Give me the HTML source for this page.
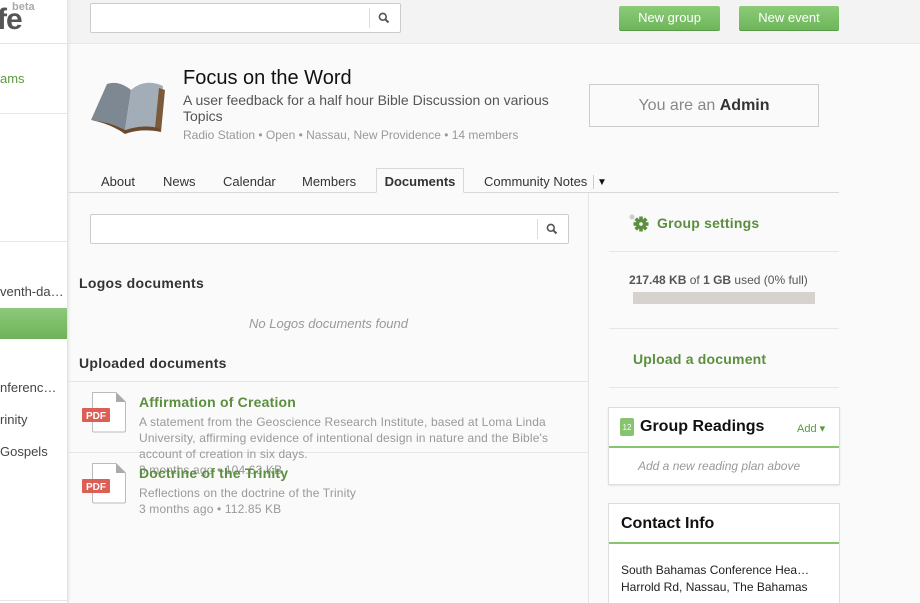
<!DOCTYPE html>
<html><head><meta charset="utf-8"><style>
*{margin:0;padding:0;box-sizing:border-box}
html,body{width:920px;height:603px;overflow:hidden}
body{background:#fafafa;font-family:"Liberation Sans",Arial,sans-serif;position:relative;color:#333}
.a{position:absolute}
.side{left:0;top:0;width:68px;height:603px;background:#fff;border-right:1px solid #e2e2e2;box-shadow:1px 0 3px rgba(0,0,0,.08);overflow:hidden;z-index:2}
.top{left:69px;top:0;width:851px;height:44px;background:#f3f3f3;border-bottom:1px solid #e8e8e8}
.hr{height:1px;background:#e6e6e6}
.btn{background:linear-gradient(#8ccb78,#6db65a);color:#fff;font-size:13px;text-align:center;line-height:24px;border-radius:2px;border-bottom:1px solid #5a9a48}
.g{color:#5b8f3f;font-weight:bold}
.gray{color:#999}
</style></head><body>
<div class="a side">
  <div class="a" style="left:-3px;top:3px;font-size:30px;font-weight:bold;color:#555;letter-spacing:-1px">fe</div>
  <div class="a" style="left:12px;top:1px;font-size:11px;color:#aaa;font-weight:bold">beta</div>
  <div class="a hr" style="left:0;top:43px;width:68px;background:#e4e4e4"></div>
  <div class="a" style="left:0;top:71px;font-size:13px;color:#5b9a3d">ams</div>
  <div class="a hr" style="left:0;top:113px;width:68px"></div>
  <div class="a hr" style="left:0;top:241px;width:68px"></div>
  <div class="a" style="left:0;top:284px;font-size:13px;color:#444;white-space:nowrap">venth-da…</div>
  <div class="a" style="left:0;top:308px;width:68px;height:31px;background:linear-gradient(#8cc97a,#6fb25b)"></div>
  <div class="a" style="left:0;top:380px;font-size:13px;color:#444;white-space:nowrap">nferenc…</div>
  <div class="a" style="left:0;top:412px;font-size:13px;color:#444">rinity</div>
  <div class="a" style="left:0;top:444px;font-size:13px;color:#444">Gospels</div>
  <div class="a hr" style="left:0;top:600px;width:68px"></div>
</div>
<div class="a top"></div>
<div class="a" style="left:90px;top:3px;width:311px;height:30px;background:#fff;border:1px solid #ccc;border-radius:2px"></div>
<div class="a" style="left:369px;top:8px;width:1px;height:20px;background:#ddd"></div>
<svg class="a" style="left:378px;top:12px" width="12" height="12" viewBox="0 0 12 12"><circle cx="4.8" cy="4.8" r="3.4" fill="none" stroke="#555" stroke-width="1.6"/><path d="M7.3 7.3L10.5 10.5" stroke="#555" stroke-width="2"/></svg>
<div class="a btn" style="left:619px;top:6px;width:101px">New group</div>
<div class="a btn" style="left:739px;top:6px;width:100px">New event</div>

<svg class="a" style="left:89px;top:72px" width="80" height="64" viewBox="0 0 80 64">
<path d="M2 48 L18 12 Q30 8 42 18 L36 58 Q22 50 2 48Z" fill="#7d8893"/>
<path d="M42 18 Q56 6 74 14 L70 56 Q54 52 36 58Z" fill="#a3adb7"/>
<path d="M70 16 L76 18 L72 60 L66 56Z" fill="#7a5a3a"/>
<path d="M2 48 Q22 52 36 62 Q52 56 72 60 L70 56 Q54 52 36 58 Q22 50 2 48Z" fill="#6b4a2e"/>
</svg>
<div class="a" style="left:183px;top:67px;font-size:20px;color:#111">Focus on the Word</div>
<div class="a" style="left:183px;top:92px;width:390px;font-size:14px;line-height:16px;color:#555">A user feedback for a half hour Bible Discussion on various Topics</div>
<div class="a gray" style="left:183px;top:128px;font-size:12px">Radio Station • Open • Nassau, New Providence • 14 members</div>
<div class="a" style="left:589px;top:84px;width:230px;height:43px;border:1px solid #ccc;text-align:center;line-height:41px;font-size:16px;color:#888">You are an <b style="color:#333">Admin</b></div>

<div class="a" style="left:69px;top:192px;width:770px;height:1px;background:#d8d8d8"></div>
<div class="a" style="left:101px;top:174px;font-size:13px;color:#333">About</div>
<div class="a" style="left:163px;top:174px;font-size:13px;color:#333">News</div>
<div class="a" style="left:223px;top:174px;font-size:13px;color:#333">Calendar</div>
<div class="a" style="left:302px;top:174px;font-size:13px;color:#333">Members</div>
<div class="a" style="left:376px;top:168px;width:88px;height:25px;border:1px solid #d8d8d8;border-bottom:1px solid #fafafa;background:#fafafa;font-size:13px;font-weight:bold;text-align:center;line-height:25px;color:#333">Documents</div>
<div class="a" style="left:484px;top:174px;font-size:13px;color:#333">Community Notes</div>
<div class="a" style="left:593px;top:175px;width:1px;height:14px;background:#ccc"></div>
<div class="a" style="left:597px;top:177px;font-size:10px;color:#111">▼</div>
<div class="a" style="left:588px;top:193px;width:1px;height:410px;background:#e4e4e4"></div>

<div class="a" style="left:90px;top:214px;width:479px;height:30px;background:#fff;border:1px solid #ccc;border-radius:2px"></div>
<div class="a" style="left:537px;top:219px;width:1px;height:20px;background:#ddd"></div>
<svg class="a" style="left:546px;top:223px" width="12" height="12" viewBox="0 0 12 12"><circle cx="4.8" cy="4.8" r="3.4" fill="none" stroke="#555" stroke-width="1.6"/><path d="M7.3 7.3L10.5 10.5" stroke="#555" stroke-width="2"/></svg>

<div class="a" style="left:79px;top:275px;font-size:14px;font-weight:bold;color:#333;letter-spacing:.3px">Logos documents</div>
<div class="a gray" style="left:249px;top:316px;font-size:13px;font-style:italic">No Logos documents found</div>
<div class="a" style="left:79px;top:355px;font-size:14px;font-weight:bold;color:#333;letter-spacing:.3px">Uploaded documents</div>
<div class="a hr" style="left:69px;top:381px;width:519px"></div>
<div class="a hr" style="left:69px;top:452px;width:519px"></div>

<svg class="a" style="left:82px;top:391px" width="44" height="42" viewBox="0 0 44 42"><path d="M10.5 1.5H34L43.5 11V39.5Q43.5 41 42 41H12Q10.5 41 10.5 39.5Z" fill="#fff" stroke="#bbb"/><path d="M34 1.5L43.5 11H34Z" fill="#aaa"/><rect x="0" y="17" width="28" height="14" rx="1" fill="#db5f55"/><text x="14" y="28" font-size="10" font-weight="bold" fill="#fff" text-anchor="middle" font-family="Liberation Sans">PDF</text></svg>
<svg class="a" style="left:82px;top:462px" width="44" height="42" viewBox="0 0 44 42"><path d="M10.5 1.5H34L43.5 11V39.5Q43.5 41 42 41H12Q10.5 41 10.5 39.5Z" fill="#fff" stroke="#bbb"/><path d="M34 1.5L43.5 11H34Z" fill="#aaa"/><rect x="0" y="17" width="28" height="14" rx="1" fill="#db5f55"/><text x="14" y="28" font-size="10" font-weight="bold" fill="#fff" text-anchor="middle" font-family="Liberation Sans">PDF</text></svg>

<div class="a g" style="left:139px;top:394px;font-size:14px;letter-spacing:.2px">Affirmation of Creation</div>
<div class="a gray" style="left:139px;top:414px;width:420px;font-size:12px;line-height:16px;letter-spacing:.15px">A statement from the Geoscience Research Institute, based at Loma Linda University, affirming evidence of intentional design in nature and the Bible's account of creation in six days.<br>3 months ago • 104.63 KB</div>
<div class="a g" style="left:139px;top:465px;font-size:14px;letter-spacing:.2px">Doctrine of the Trinity</div>
<div class="a gray" style="left:139px;top:485px;font-size:12px;line-height:16px;letter-spacing:.15px">Reflections on the doctrine of the Trinity<br>3 months ago • 112.85 KB</div>

<svg class="a" style="left:628px;top:214px" width="22" height="20" viewBox="0 0 22 20"><circle cx="4" cy="3" r="2.5" fill="#ccc"/><g transform="translate(13 10)" fill="#5b8f3f"><circle r="5"/><rect x="-1.8" y="-7.5" width="3.6" height="15"/><rect x="-7.5" y="-1.8" width="15" height="3.6"/><rect x="-1.8" y="-7.5" width="3.6" height="15" transform="rotate(45)"/><rect x="-1.8" y="-7.5" width="3.6" height="15" transform="rotate(-45)"/><circle r="1.8" fill="#fafafa"/></g></svg>
<div class="a g" style="left:657px;top:215px;font-size:14px;letter-spacing:.2px">Group settings</div>
<div class="a hr" style="left:609px;top:251px;width:230px"></div>
<div class="a" style="left:629px;top:273px;font-size:12px;color:#555"><b>217.48 KB</b> of <b>1 GB</b> used (0% full)</div>
<div class="a" style="left:633px;top:292px;width:182px;height:12px;background:#d6d3ce"></div>
<div class="a hr" style="left:609px;top:328px;width:230px"></div>
<div class="a g" style="left:633px;top:351px;font-size:14px;letter-spacing:.2px">Upload a document</div>
<div class="a hr" style="left:609px;top:387px;width:230px"></div>

<div class="a" style="left:608px;top:407px;width:232px;height:78px;background:#fff;border:1px solid #ddd;box-shadow:0 1px 2px rgba(0,0,0,.08)"></div>
<div class="a" style="left:620px;top:418px;width:14px;height:18px;background:#86c46f;border-radius:2px;color:#fff;font-size:8px;text-align:center;line-height:20px">12</div>
<div class="a" style="left:640px;top:418px;font-size:16px;font-weight:bold;color:#111">Group Readings</div>
<div class="a" style="left:797px;top:422px;font-size:11px;color:#5b9a3d">Add ▾</div>
<div class="a" style="left:609px;top:446px;width:230px;height:2px;background:#86c46f"></div>
<div class="a gray" style="left:638px;top:459px;font-size:12px;font-style:italic">Add a new reading plan above</div>

<div class="a" style="left:608px;top:503px;width:232px;height:110px;background:#fff;border:1px solid #ddd"></div>
<div class="a" style="left:621px;top:515px;font-size:16px;font-weight:bold;color:#111">Contact Info</div>
<div class="a" style="left:609px;top:542px;width:230px;height:2px;background:#86c46f"></div>
<div class="a" style="left:621px;top:562px;font-size:12px;line-height:17px;color:#222;white-space:nowrap">South Bahamas Conference Hea…<br>Harrold Rd, Nassau, The Bahamas</div>
</body></html>
